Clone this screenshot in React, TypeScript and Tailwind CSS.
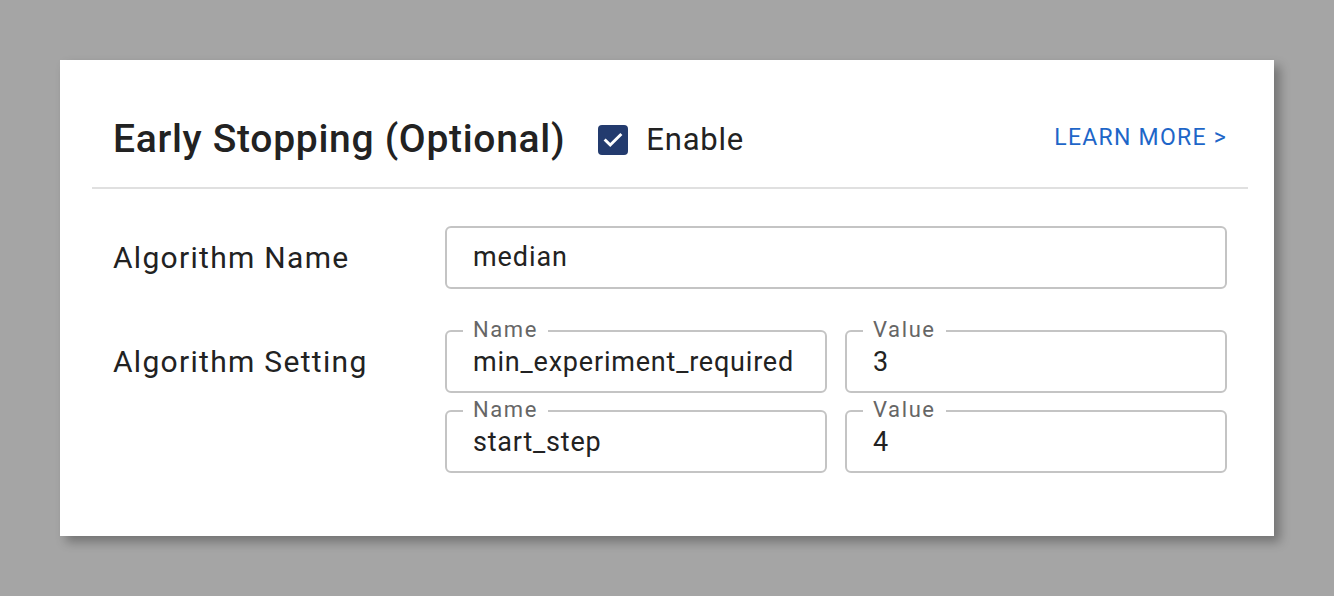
import React from "react";

function OutlinedField({ label, value }: { label: string; value: string }) {
  return (
    <div className="relative flex-1 h-[63px] rounded-[6px] border-2 border-[#c4c4c4] flex items-center pl-[26px]">
      <span className="absolute -top-[16px] left-[16px] bg-white px-[10px] text-[22px] tracking-[1.6px] leading-[28px] text-[#666666]">
        {label}
      </span>
      <span className="text-[27px] tracking-[0.8px] text-[#222222] leading-none pt-[2px]">{value}</span>
    </div>
  );
}

export default function App() {
  return (
    <div
      className="w-[1334px] h-[596px] bg-[#a5a5a5] pt-[60px] pl-[60px]"
      style={{ fontFamily: "Roboto, 'Noto Sans', sans-serif" }}
    >
      <div className="w-[1214px] h-[476px] bg-white shadow-[6px_6px_10px_rgba(0,0,0,0.3)] pl-[32px] pr-[26px]">
        <div className="h-[129px] flex items-center pl-[21px] pr-[21px] pt-[32px] border-b-2 border-[#e0e0e0]">
          <h1 className="text-[39px] tracking-[0.7px] font-medium text-[#222222] leading-none">Early Stopping (Optional)</h1>
          <div className="ml-[33px] flex items-center">
            <div className="w-[30px] h-[30px] rounded-[4px] bg-[#233b6e] flex items-center justify-center">
              <svg width="22" height="22" viewBox="0 0 24 24" fill="none">
                <path d="M4 12.5l5 5L20 6.5" stroke="white" strokeWidth="3.2" strokeLinecap="square" />
              </svg>
            </div>
            <span className="ml-[18px] text-[31px] tracking-[0.8px] text-[#222222] leading-none">Enable</span>
          </div>
          <div className="ml-auto text-[23px] tracking-[1.25px] text-[#1e66c8] leading-none -mt-[4px]">LEARN MORE &gt;</div>
        </div>
        <div className="px-[21px]">
          <div className="flex items-center mt-[37px]">
            <div className="w-[332px] text-[30px] tracking-[1.3px] text-[#222222]">Algorithm Name</div>
            <div className="flex-1 h-[63px] rounded-[6px] border-2 border-[#c4c4c4] flex items-center pl-[26px]">
              <span className="text-[27px] tracking-[0.9px] text-[#222222] leading-none">median</span>
            </div>
          </div>
          <div className="flex mt-[41px]">
            <div className="w-[332px] h-[63px] flex items-center text-[30px] tracking-[1.3px] text-[#222222]">Algorithm Setting</div>
            <div className="flex-1 flex flex-col gap-[17px]">
              <div className="flex gap-[18px]">
                <OutlinedField label="Name" value="min_experiment_required" />
                <OutlinedField label="Value" value="3" />
              </div>
              <div className="flex gap-[18px]">
                <OutlinedField label="Name" value="start_step" />
                <OutlinedField label="Value" value="4" />
              </div>
            </div>
          </div>
        </div>
      </div>
    </div>
  );
}
